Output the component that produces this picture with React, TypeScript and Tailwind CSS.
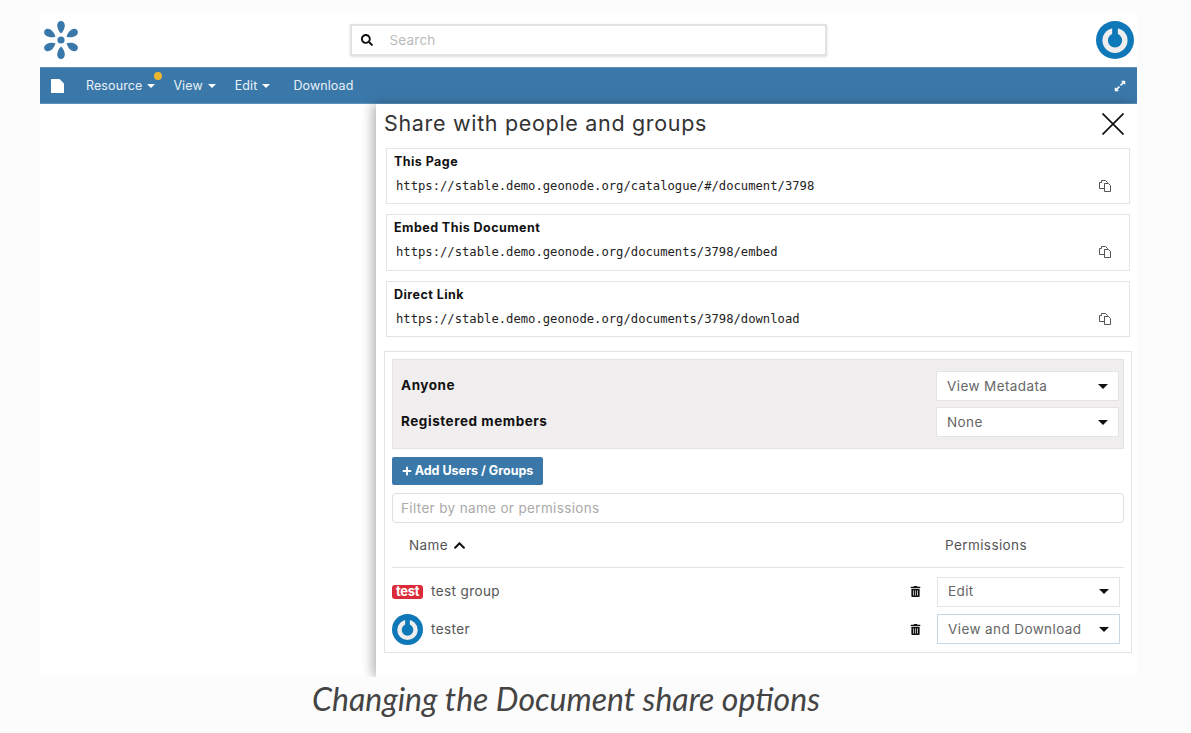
import { FaChevronUp, FaExpandAlt, FaPlus, FaSearch, FaTrashAlt } from "react-icons/fa";

const uiFont = "font-['Inter','Noto_Sans',sans-serif]";

const links = [
  { title: "This Page", url: "https://stable.demo.geonode.org/catalogue/#/document/3798", height: "h-[56px]" },
  { title: "Embed This Document", url: "https://stable.demo.geonode.org/documents/3798/embed", height: "h-[57px]" },
  { title: "Direct Link", url: "https://stable.demo.geonode.org/documents/3798/download", height: "h-[56px]" },
];

const Logo = () => (
  <svg width="38" height="40" viewBox="0 0 38 40" fill="#3b78aa">
    <circle cx="19" cy="20" r="3.600" />
    {[0, 60, 120, 180, 240, 300].map((a) => (
      <path key={a} transform={`rotate(${a} 19 20)`} d="M19 1c2.300 0 3.800 2 3.800 4.600 0 3-1.800 6.200-3.800 8-2-1.800-3.800-5-3.800-8C15.200 3 16.700 1 19 1z" />
    ))}
  </svg>
);

const PowerAvatar = ({ size }: { size: number }) => (
  <svg width={size} height={size} viewBox="0 0 40 40">
    <circle cx="20" cy="20" r="20" fill="#0f78b8" />
    <circle cx="20" cy="20.500" r="13.200" fill="#eeeeee" />
    <circle cx="20" cy="20.500" r="7.500" fill="#0f78b8" />
    <rect x="17" y="5" width="6" height="12" fill="#0f78b8" />
  </svg>
);

const CopyIcon = () => (
  <svg width="14" height="14" viewBox="0 0 14 14" fill="white" stroke="#555" strokeWidth="1">
    <path d="M1.500 3.500h2V1.500h4l2 2v1h-3v5h-5z" />
    <path d="M6.500 4.500h4l2 2v6h-6z" />
  </svg>
);

const Caret = () => <span className="h-0 w-0 border-x-[5px] border-t-[5px] border-x-transparent border-t-[#111]" />;

const SmallCaret = () => <span className="ml-[5px] inline-block h-0 w-0 border-x-[4px] border-t-[4px] border-x-transparent border-t-white align-middle" />;

const Select = ({ value, focused }: { value: string; focused?: boolean }) => (
  <div className={`flex h-[30px] w-[183px] items-center justify-between bg-white pl-[10px] pr-[10px] text-[13.500px] tracking-[0.4px] text-[#666] border ${focused ? "border-[#c5d9e8]" : "border-[#e4e4e4]"}`}>
    <span>{value}</span>
    <Caret />
  </div>
);

export default function App() {
  return (
    <div className={`${uiFont} h-[733px] w-[1191px] overflow-hidden bg-[#fcfcfc] pt-[13px] pl-[40px]`}>
      <div className="h-[664px] w-[1097px] overflow-hidden bg-white">
        {/* header */}
        <div className="flex h-[54px] items-center justify-between pl-[2px] pr-[3px]">
          <Logo />
          <div className="flex h-[32px] w-[477px] items-center border-2 border-[#e2e2e2] bg-white pl-[9px] shadow-sm">
            <FaSearch size={12} className="text-[#111]" />
            <span className="ml-[17px] text-[13.500px] tracking-[0.2px] text-[#bbb]">Search</span>
          </div>
          <PowerAvatar size={38} />
        </div>

        {/* nav */}
        <div className="flex h-[37px] items-center border-y border-[#5f93bc] bg-[#3b78aa] pl-[11px] pr-[11px] pt-[1px] text-[12.500px] tracking-[0.1px] text-[#e8f0f6]">
          <svg width="13" height="14" viewBox="0 0 13 14" fill="white">
            <path d="M0 0h8.500L13 4.500V14H0z" />
          </svg>
          <span className="relative ml-[22px]">
            Resource
            <SmallCaret />
            <span className="absolute right-[-7px] top-[-5px] h-[8px] w-[8px] rounded-full bg-[#ecb72e]" />
          </span>
          <span className="ml-[18px]">View<SmallCaret /></span>
          <span className="ml-[19px]">Edit<SmallCaret /></span>
          <span className="ml-[23px]">Download</span>
          <FaExpandAlt size={12} className="ml-auto text-white" />
        </div>

        {/* share panel */}
        <div className="ml-[336px] h-[573px] bg-white pl-[8px] pr-[5px] shadow-[-4px_0_10px_rgba(0,0,0,0.28)]">
          <div className="flex h-[44px] items-center justify-between pb-[5px] pr-[8px]">
            <span className="text-[21.500px] tracking-[0.68px] text-[#333]">Share with people and groups</span>
            <svg width="22" height="22" viewBox="0 0 22 22" stroke="#111" strokeWidth="1.700">
              <path d="M0.500 0.500 21.500 21.500M21.500 0.500 0.500 21.500" />
            </svg>
          </div>

          <div className="flex flex-col gap-[10px] pl-[2px] pr-[2px]">
            {links.map((l) => (
              <div key={l.title} className={`${l.height} border border-[#e4e4e4] pl-[7px] pr-[17px]`}>
                <div className="pt-[5px] text-[12.500px] font-bold leading-[16px] tracking-[0.45px] text-[#111]">{l.title}</div>
                <div className="mt-[7px] flex h-[18px] items-center justify-between pl-[2px]">
                  <span className="font-['DejaVu_Sans_Mono',monospace] text-[12.200px] text-[#222]">{l.url}</span>
                  <CopyIcon />
                </div>
              </div>
            ))}
          </div>

          <div className="mt-[14px] h-[302px] border border-[#e4e4e4] px-[7px] pt-[7px]">
            <div className="flex h-[90px] flex-col justify-center gap-[6px] border border-[#e4e4e4] bg-[#f0eeee] pl-[8px] pr-[4px]">
              <div className="flex items-center justify-between">
                <span className="pb-[2px] text-[13.500px] font-bold tracking-[0.55px] text-[#111]">Anyone</span>
                <Select value="View Metadata" />
              </div>
              <div className="flex items-center justify-between">
                <span className="pb-[2px] text-[13.500px] font-bold tracking-[0.55px] text-[#111]">Registered members</span>
                <Select value="None" />
              </div>
            </div>

            <button className="mt-[8px] flex h-[28px] w-[151px] items-center justify-center gap-[3px] rounded-[2px] bg-[#3b78aa] text-[12.500px] font-bold text-white">
              <FaPlus size={10} />
              Add Users / Groups
            </button>

            <div className="mt-[8px] flex h-[30px] items-center rounded-[4px] border border-[#e0e0e0] pl-[8px] text-[13.500px] tracking-[0.35px] text-[#aaa]">
              Filter by name or permissions
            </div>

            <div className="flex h-[45px] items-center justify-between border-b border-[#e4e4e4] pl-[17px] pr-[97px] text-[13.500px] tracking-[0.4px] text-[#555]">
              <span className="flex items-center gap-[5px]">
                Name
                <FaChevronUp size={13} className="text-[#111]" />
              </span>
              <span>Permissions</span>
            </div>

            <div className="flex h-[46px] items-center pt-[1px]">
              <span className="flex h-[14px] w-[31px] items-center justify-center rounded-[3px] bg-[#dc2b38] text-[13px] font-bold leading-none tracking-[-0.3px] text-white">test</span>
              <span className="ml-[8px] text-[13.500px] tracking-[0.4px] text-[#555]">test group</span>
              <FaTrashAlt size={11} className="ml-auto text-[#111]" />
              <div className="ml-[16px] mr-[4px]"><Select value="Edit" /></div>
            </div>
            <div className="flex h-[30px] items-center">
              <PowerAvatar size={31} />
              <span className="ml-[8px] text-[13.500px] tracking-[0.4px] text-[#555]">tester</span>
              <FaTrashAlt size={11} className="ml-auto text-[#111]" />
              <div className="ml-[16px] mr-[4px]"><Select value="View and Download" focused /></div>
            </div>
          </div>
        </div>
      </div>

      <div className="ml-[272px] mt-[2px] font-['Lato',sans-serif] text-[32px] italic leading-[40px] text-[#444]">
        Changing the Document share options
      </div>
    </div>
  );
}
